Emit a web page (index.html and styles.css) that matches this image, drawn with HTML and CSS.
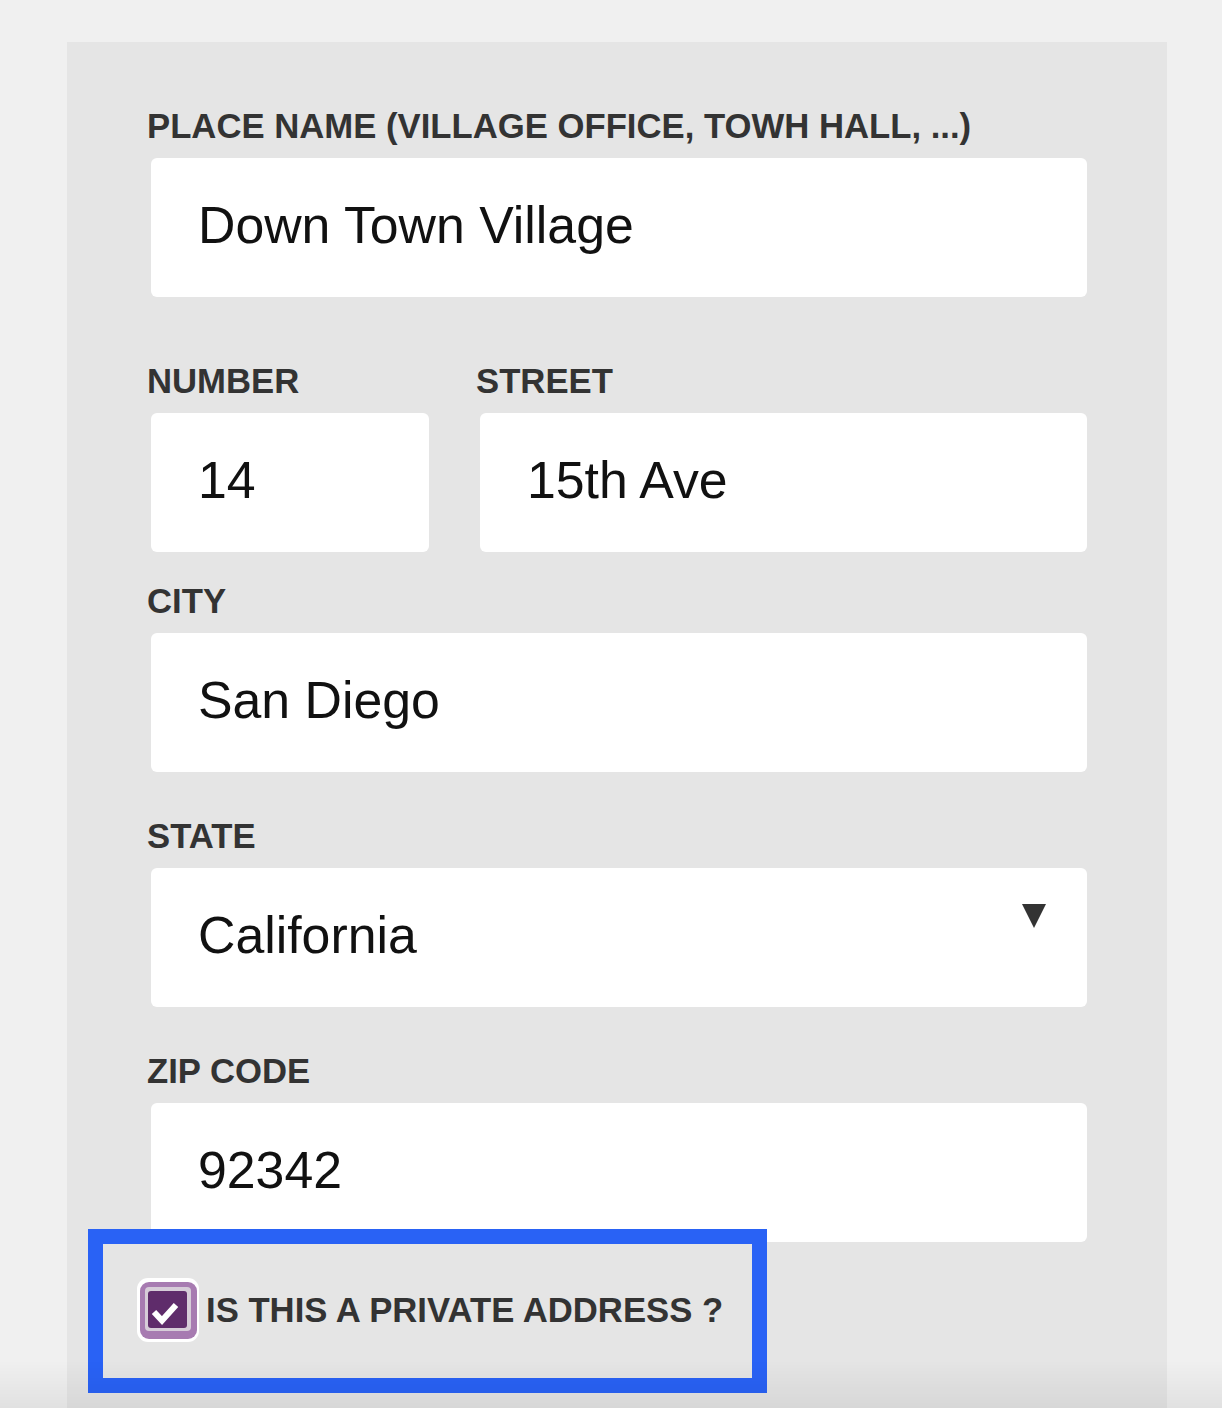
FILE: index.html
```html
<!DOCTYPE html>
<html lang="en">

<head>
    <meta charset="UTF-8">
    <meta name="viewport" content="width=device-width, initial-scale=1.0">
    <title>Address</title>

    <link rel="stylesheet" href="styles.css">
</head>

<body>
    <section id="iSecEndereco">
        <form action="" method="post">
            <div class="campo-grupo">
                <label for="iLugar">Place name (village office, towh hall, ...)</label>
                <input class="campoEntrada" type="text" name="lugar" id="iLugar" value="Down Town Village">
            </div>

            <div class="linha-dupla">
                <div class="campo-grupo">
                    <label for="iNumero">Number</label>
                    <input class="campoEntrada" type="text" name="numero" id="iNumero" value="14">
                </div>
                <div class="campo-grupo">
                    <label for="iRua">Street</label>
                    <input class="campoEntrada" type="text" name="rua" id="iRua" value="15th Ave">
                </div>
            </div>

            <div class="campo-grupo grupo-cidade">
                <label for="iCidade">City</label>
                <input class="campoEntrada" type="text" name="cidade" id="iCidade" value="San Diego">
            </div>

            <div class="campo-grupo grupo-estado">
                <label for="iEstado">State</label>
                <div class="select-caixa">
                    <select class="campoEntrada" name="estado" id="iEstado">
                        <option>California</option>
                        <option>Nevada</option>
                        <option>Oregon</option>
                    </select>
                </div>
            </div>

            <div class="campo-grupo grupo-cep">
                <label for="iCep">Zip code</label>
                <input class="campoEntrada" type="text" name="cep" id="iCep" value="92342">
            </div>

            <div class="privado">
                <label class="privado-label" for="iPrivado">
                    <input type="checkbox" name="privado" id="iPrivado" checked>
                    <svg class="caixa-check" width="62" height="64" viewBox="0 0 62 64">
                        <rect x="0" y="0" width="62" height="64" rx="11" fill="#ffffff" />
                        <rect x="3" y="4" width="57" height="57" rx="9" fill="#a77bb1" />
                        <rect x="8" y="9" width="46" height="44" rx="4" fill="#d6ccd8" />
                        <rect x="11" y="13" width="39" height="37" rx="3" fill="#5f2c6b" />
                        <path d="M17 34 L25 42.5 L39 27" fill="none" stroke="#ffffff" stroke-width="6" />
                    </svg>
                    <span>Is this a private address ?</span>
                </label>
            </div>
        </form>
    </section>

    <div class="sombra-rodape"></div>
</body>

</html>
```

FILE: styles.css
```css
* {
    margin: 0;
    padding: 0;
    box-sizing: border-box;
    font-family: "Liberation Sans", Arial, Helvetica, sans-serif;
}

html,
body {
    height: 100%;
}

body {
    background-color: #f0f0f0;
    overflow: hidden;
}

#iSecEndereco {
    background-color: #e5e5e5;
    width: 1100px;
    min-height: calc(100vh - 42px);
    margin: 42px 0 0 67px;
    padding: 64px 80px 0 80px;
}

label {
    display: block;
    font-size: 34.7px;
    line-height: 40px;
    font-weight: bold;
    text-transform: uppercase;
    color: #333333;
    margin-bottom: 12px;
}

.campoEntrada {
    display: block;
    width: calc(100% - 4px);
    height: 139px;
    margin-left: 4px;
    padding: 0 47px 5px 47px;
    border: none;
    border-radius: 6px;
    background-color: #ffffff;
    color: #111111;
    font-size: 51.8px;
    outline: none;
}

.linha-dupla {
    display: grid;
    grid-template-columns: 282px 1fr;
    gap: 47px;
    margin-top: 64px;
}

.grupo-cidade {
    margin-top: 29px;
}

.grupo-estado {
    margin-top: 44px;
}

.grupo-cep {
    margin-top: 44px;
}

/* select sem a seta nativa, com triângulo desenhado */
.select-caixa {
    position: relative;
}

.select-caixa select {
    appearance: none;
    -webkit-appearance: none;
}

.select-caixa::after {
    content: "";
    position: absolute;
    top: 36px;
    right: 41px;
    width: 0;
    height: 0;
    border-left: 12px solid transparent;
    border-right: 12px solid transparent;
    border-top: 24px solid #333333;
    pointer-events: none;
}

.privado {
    position: relative;
    width: 679px;
    margin: -13px 0 0 -59px;
    padding: 34px 0 36px 34px;
    border: 15px solid #2962f5;
}

.privado-label {
    display: flex;
    align-items: center;
    gap: 7px;
    margin-bottom: 0;
    cursor: pointer;
}

.privado-label input {
    display: none;
}

.caixa-check {
    display: block;
    flex-shrink: 0;
}

.sombra-rodape {
    position: fixed;
    left: 0;
    right: 0;
    bottom: 0;
    height: 48px;
    background: linear-gradient(to bottom, rgba(0, 0, 0, 0), rgba(0, 0, 0, 0.06));
    pointer-events: none;
}
```
